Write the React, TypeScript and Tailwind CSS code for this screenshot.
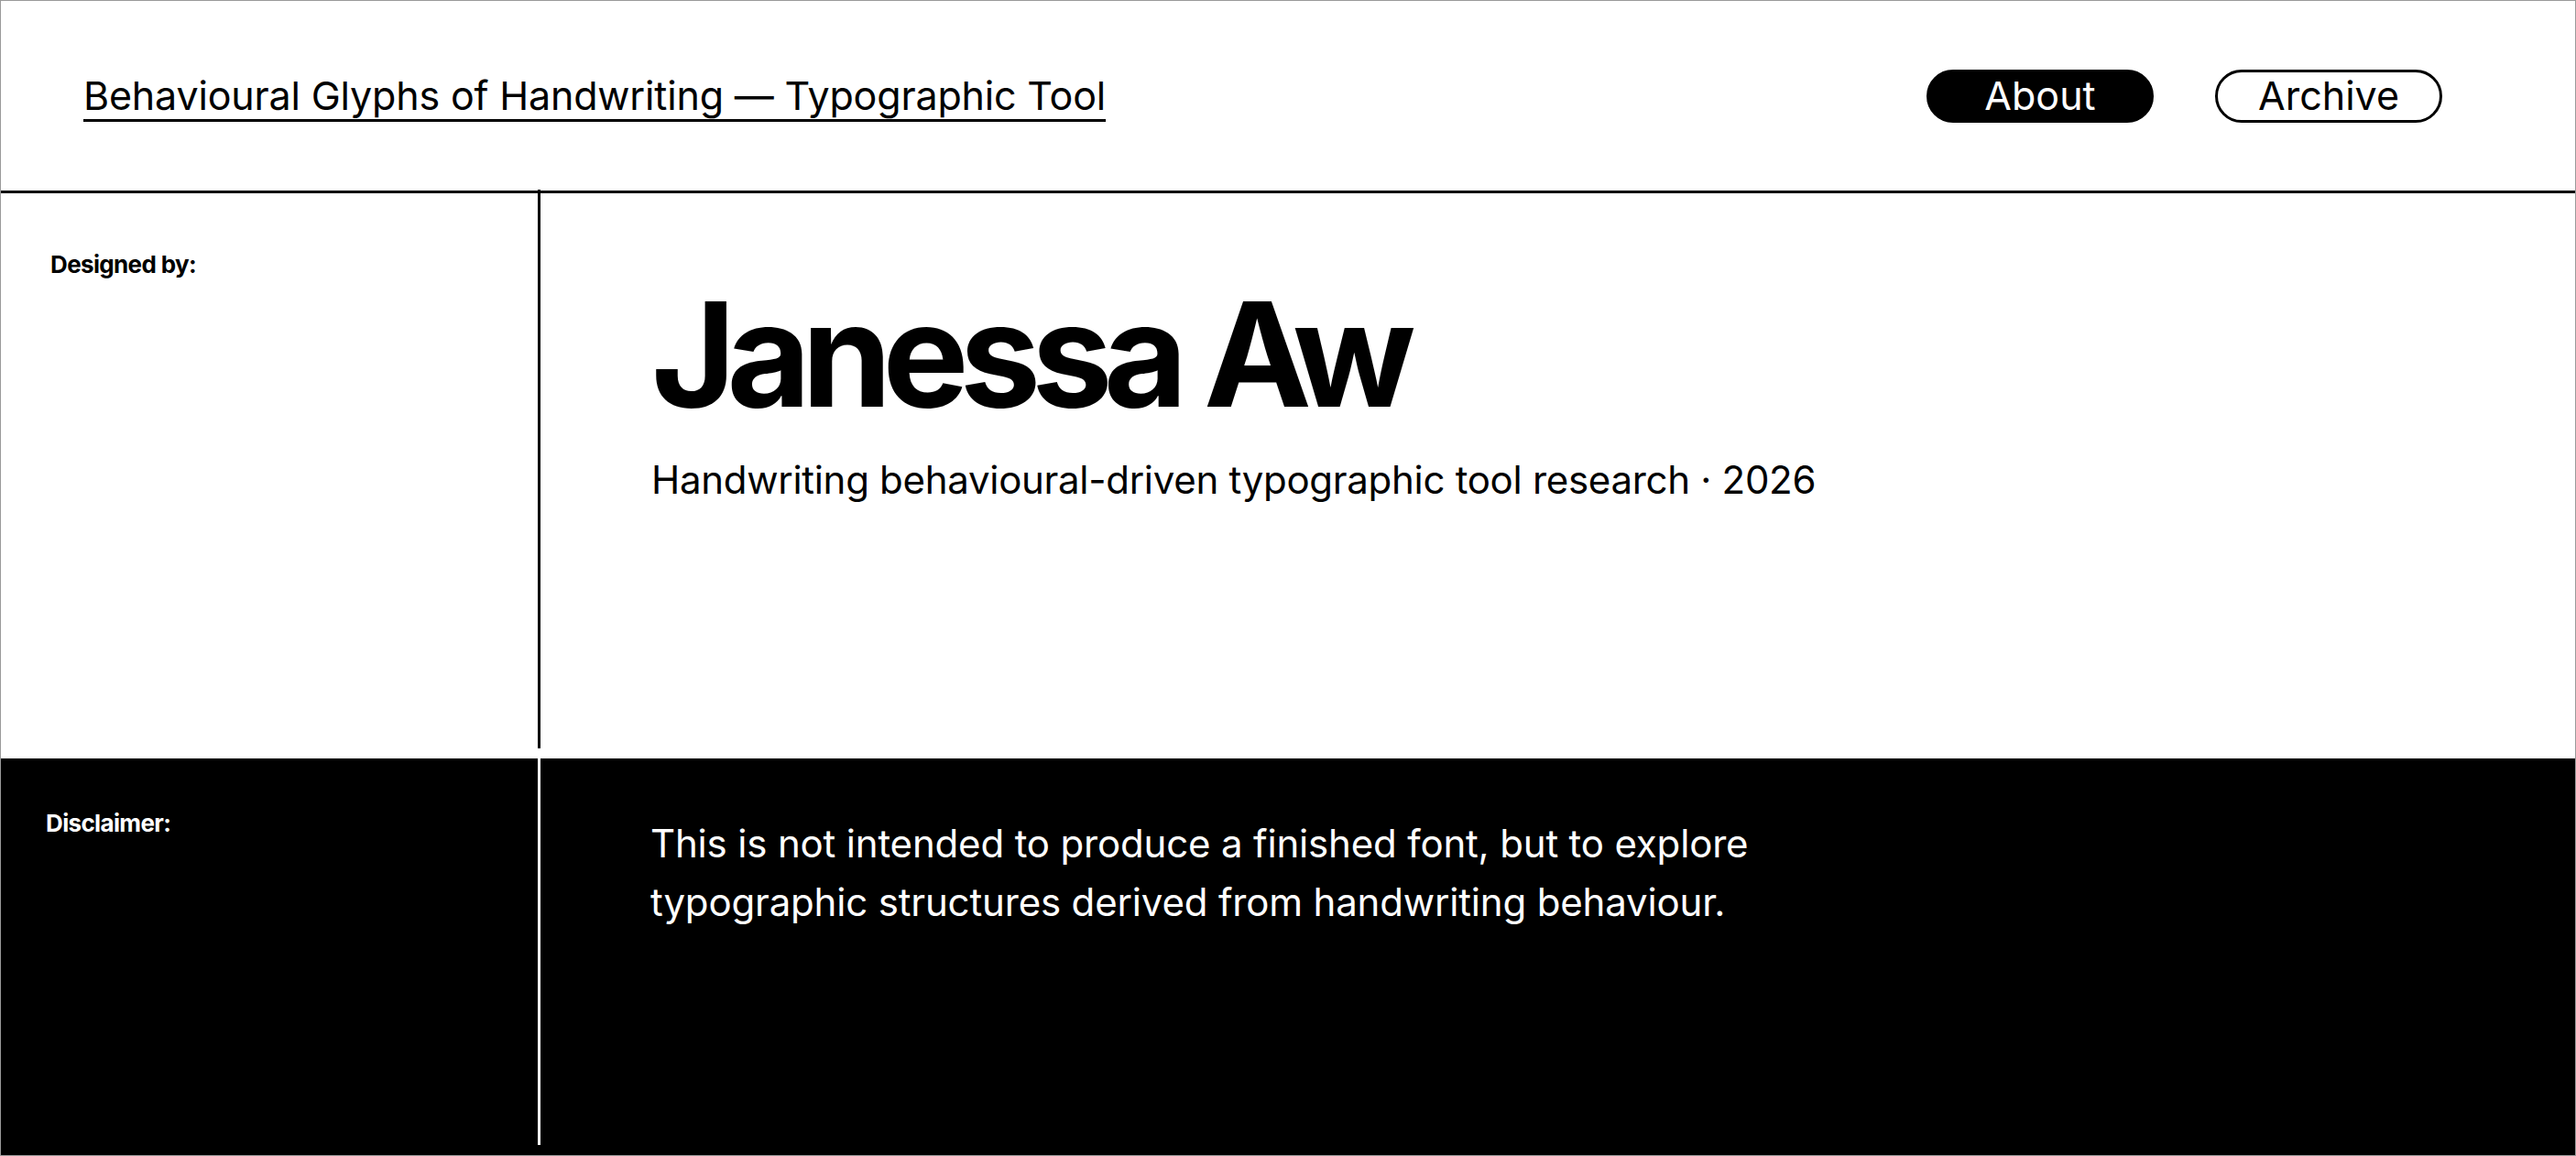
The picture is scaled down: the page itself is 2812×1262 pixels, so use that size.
import * as React from 'react'

const font = { fontFamily: 'Inter, "Noto Sans", sans-serif' }

export default function App() {
  return (
    <div className="w-full h-[1262px] flex flex-col border border-[#9a9a9a] bg-white text-black overflow-hidden" style={font}>
      {/* header */}
      <header className="h-[210px] shrink-0 flex items-center justify-between border-b-[3px] border-black pl-[90px] pr-[145px]">
        <a className="text-[43px] leading-none underline decoration-[3px] underline-offset-[10px] tracking-[-0.004em]">
          Behavioural Glyphs of Handwriting — Typographic Tool
        </a>
        <nav className="flex gap-[67px]">
          <button className="w-[248px] h-[58px] rounded-full bg-black text-white border-[3px] border-black text-[43px] leading-none">About</button>
          <button className="w-[248px] h-[58px] rounded-full bg-white text-black border-[3px] border-black text-[43px] leading-none">Archive</button>
        </nav>
      </header>

      {/* designer */}
      <section className="h-[617px] shrink-0 flex items-start">
        <div className="w-[589px] h-[610px] -mt-[4px] shrink-0 border-r-[3px] border-black pl-[54px] pt-[69px]">
          <h2 className="text-[26px] leading-none font-bold tracking-[-0.025em]">Designed by:</h2>
        </div>
        <div className="pl-[121px] pt-[97px]">
          <h1 className="text-[158px] leading-none font-bold tracking-[-0.063em]">Janessa Aw</h1>
          <p className="mt-[37px] text-[42px] leading-none tracking-[-0.007em]">
            Handwriting behavioural-driven typographic tool research · 2026
          </p>
        </div>
      </section>

      {/* disclaimer */}
      <section className="flex-1 flex items-start bg-black text-white">
        <div className="w-[589px] h-[422px] shrink-0 border-r-[3px] border-white pl-[49px] pt-[58px]">
          <h2 className="text-[26px] leading-none font-bold tracking-[-0.025em]">Disclaimer:</h2>
        </div>
        <div className="pl-[120px] pt-[61px]">
          <p className="text-[42px] leading-[64px] tracking-[-0.004em] max-w-[1300px]">
            This is not intended to produce a finished font, but to explore
            <br />
            typographic structures derived from handwriting behaviour.
          </p>
        </div>
      </section>
    </div>
  )
}
